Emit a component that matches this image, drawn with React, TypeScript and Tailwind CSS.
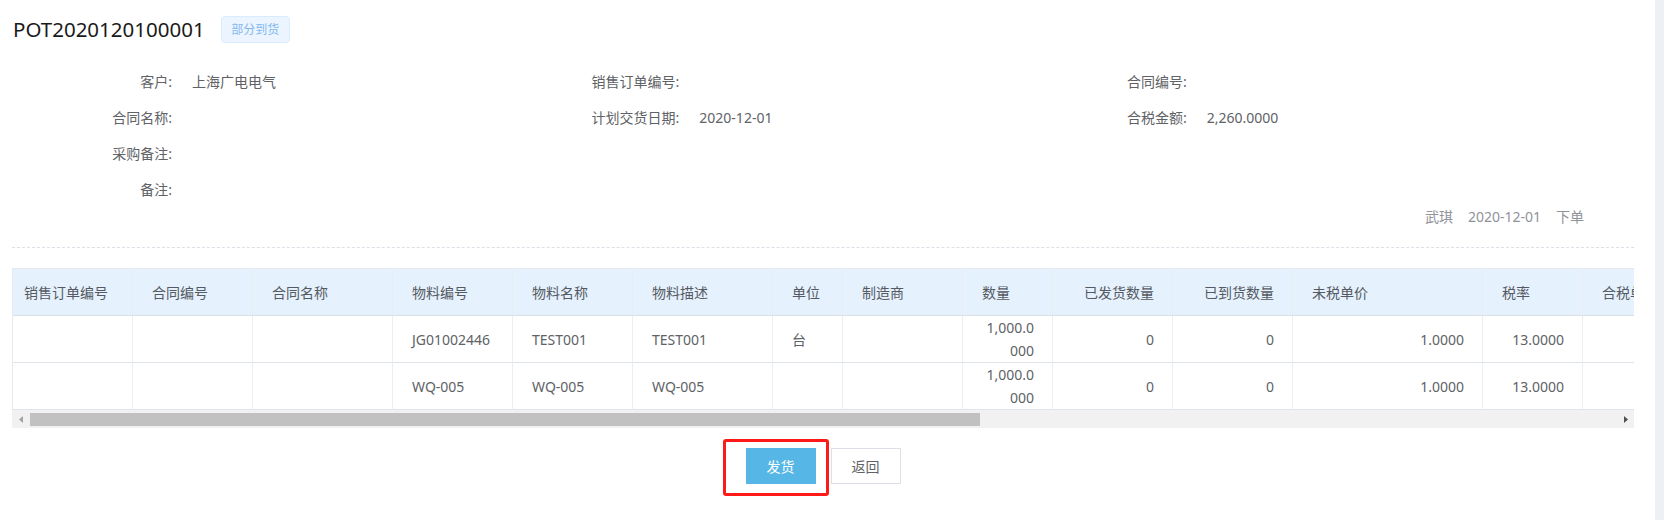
import React from "react";

type Col = { title: string; w: number; head: "l" | "r"; body: "l" | "r" };

const cols: Col[] = [
  { title: "销售订单编号", w: 120, head: "l", body: "l" },
  { title: "合同编号", w: 120, head: "l", body: "l" },
  { title: "合同名称", w: 140, head: "l", body: "l" },
  { title: "物料编号", w: 120, head: "l", body: "l" },
  { title: "物料名称", w: 120, head: "l", body: "l" },
  { title: "物料描述", w: 140, head: "l", body: "l" },
  { title: "单位", w: 70, head: "l", body: "l" },
  { title: "制造商", w: 120, head: "l", body: "l" },
  { title: "数量", w: 90, head: "l", body: "r" },
  { title: "已发货数量", w: 120, head: "r", body: "r" },
  { title: "已到货数量", w: 120, head: "r", body: "r" },
  { title: "未税单价", w: 190, head: "l", body: "r" },
  { title: "税率", w: 100, head: "l", body: "r" },
  { title: "合税单价", w: 120, head: "l", body: "r" },
];

const rows: string[][] = [
  ["", "", "", "JG01002446", "TEST001", "TEST001", "台", "", "1,000.0000", "0", "0", "1.0000", "13.0000", ""],
  ["", "", "", "WQ-005", "WQ-005", "WQ-005", "", "", "1,000.0000", "0", "0", "1.0000", "13.0000", ""],
];

const info: [string, string][][] = [
  [["客户:", "上海广电电气"], ["销售订单编号:", ""], ["合同编号:", ""]],
  [["合同名称:", ""], ["计划交货日期:", "2020-12-01"], ["合税金额:", "2,260.0000"]],
  [["采购备注:", ""]],
  [["备注:", ""]],
];

function Field({ label, value }: { label: string; value: string }) {
  return (
    <div className="flex items-center">
      <span className="w-[130px] pr-[20px] text-right shrink-0">{label}</span>
      <span>{value}</span>
    </div>
  );
}

export default function App() {
  return (
    <div className="flex w-[1664px] h-[520px] bg-white font-['Noto_Sans','Noto_Sans_CJK_SC',sans-serif] text-[14px] text-[#606266] overflow-hidden">
      <div className="w-[1655px] shrink-0 pl-[12px] pr-[21px]">
        {/* title */}
        <div className="mt-[16px] h-[27px] flex items-center">
          <h1 className="ml-[1px] text-[20.5px] text-[#1a1a1a] leading-none">POT2020120100001</h1>
          <span className="ml-[16px] h-[27px] w-[69px] flex items-center justify-center rounded-[4px] border border-[#d9ecff] bg-[#ecf5ff] text-[12px] text-[#84b9ee]">
            部分到货
          </span>
        </div>

        {/* info */}
        <div className="mt-[20px] px-[50px]">
          {info.map((r, i) => (
            <div key={i} className="grid grid-cols-3 h-[36px]">
              {r.map(([l, v]) => (
                <Field key={l} label={l} value={v} />
              ))}
            </div>
          ))}
          <div className="h-[18px] flex items-center justify-end gap-[15px] text-[#909399]">
            <span>武琪</span>
            <span>2020-12-01</span>
            <span>下单</span>
          </div>
        </div>

        <div className="mt-[22px] border-t border-dashed border-[#dcdfe6]" />

        {/* table */}
        <div className="mt-[20px] w-[1622px] overflow-hidden">
          <div className="flex w-max border-t border-l border-[#e4e9ef] bg-[#e5f1fd] text-[#555a62]">
            {cols.map((c, i) => (
              <div
                key={c.title}
                style={{ width: c.w }}
                className={`h-[47px] shrink-0 flex items-center border-r border-b border-r-[#e9edf2] border-b-[#d9dfe6] whitespace-nowrap ${
                  c.head === "r" ? "justify-end pr-[18px]" : i === 0 ? "pl-[11px]" : "pl-[19px]"
                }`}
              >
                {c.title}
              </div>
            ))}
          </div>
          {rows.map((r, ri) => (
            <div key={ri} className="flex w-max border-l border-[#e4e9ef]">
              {cols.map((c, ci) => (
                <div
                  key={ci}
                  style={{ width: c.w }}
                  className={`h-[47px] shrink-0 flex items-center border-r border-b border-r-[#ebeef5] border-b-[#dfe4ea] leading-[23px] ${
                    c.body === "r" ? "justify-end pr-[18px] text-right" : "pl-[19px]"
                  }`}
                >
                  {c.title === "数量" ? <span className="w-[53px] break-all">{r[ci]}</span> : r[ci]}
                </div>
              ))}
            </div>
          ))}
          {/* horizontal scrollbar */}
          <div className="flex items-center h-[18px] bg-[#f1f1f1]">
            <div className="w-[18px] h-[18px] flex items-center justify-center">
              <svg width="5" height="7" viewBox="0 0 5 7">
                <polygon points="4,0 4,7 0,3.5" fill="#a3a3a3" />
              </svg>
            </div>
            <div className="w-[950px] h-[13px] bg-[#c1c1c1]" />
            <div className="flex-1" />
            <div className="w-[18px] h-[18px] flex items-center justify-center">
              <svg width="5" height="7" viewBox="0 0 5 7">
                <polygon points="1,0 1,7 5,3.5" fill="#505050" />
              </svg>
            </div>
          </div>
        </div>

        {/* actions */}
        <div className="mt-[20px] w-[1622px] flex justify-center gap-[15px]">
          <div className="relative">
            <button className="w-[70px] h-[36px] bg-[#56b7e6] text-white text-[14px]">发货</button>
            <div className="absolute left-[-23px] top-[-9px] w-[106px] h-[57px] border-[3px] border-[#ff1a1a] rounded-[3px] pointer-events-none" />
          </div>
          <button className="w-[70px] h-[36px] bg-white border border-[#dcdfe6] text-[#606266] text-[14px]">返回</button>
        </div>
      </div>
      <div className="flex-1 bg-[#eef0f5]" />
    </div>
  );
}
